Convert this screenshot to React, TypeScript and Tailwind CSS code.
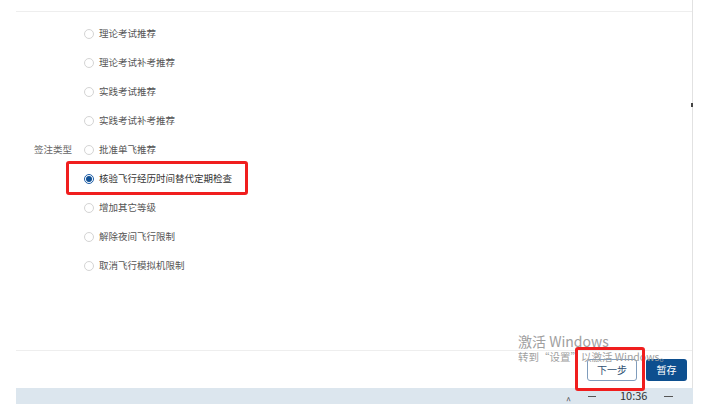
const options = [
  "理论考试推荐",
  "理论考试补考推荐",
  "实践考试推荐",
  "实践考试补考推荐",
  "批准单飞推荐",
  "核验飞行经历时间替代定期检查",
  "增加其它等级",
  "解除夜间飞行限制",
  "取消飞行模拟机限制",
];

const selected = 5;

function Radio({ checked }: { checked: boolean }) {
  return checked ? (
    <span className="flex h-[10px] w-[10px] items-center justify-center rounded-full border border-[#1d5ea8] bg-white">
      <span className="h-[6px] w-[6px] rounded-full bg-[#0f4f94]" />
    </span>
  ) : (
    <span className="h-[10px] w-[10px] rounded-full border border-[#d4d4d4] bg-white" />
  );
}

export default function App() {
  return (
    <div
      className="relative h-[404px] w-[711px] overflow-hidden bg-white"
      style={{ fontFamily: '"Noto Sans CJK SC", "Noto Sans", sans-serif' }}
    >
      <div className="ml-[16px] flex h-[388px] w-[677px] flex-col border-r border-[#e2e2e2]">
        <div className="h-[12px] shrink-0 border-b border-[#eeeeee]" />

        {/* Form */}
        <div className="relative flex flex-1 items-start border-b border-[#eeeeee]">
          <div className="flex items-center pt-[7px]">
            <div className="ml-[18px] w-[50px] text-[9.5px] leading-none text-[#666]">签注类型</div>
            <div className="flex flex-col">
              {options.map((o, i) => (
                <div key={o} className="flex h-[29px] items-center gap-[5px]">
                  <Radio checked={i === selected} />
                  <span
                    className={
                      i === selected
                        ? "text-[9.5px] leading-none text-[#333]"
                        : "text-[9.5px] leading-none text-[#555]"
                    }
                  >
                    {o}
                  </span>
                </div>
              ))}
            </div>
          </div>

          {/* annotation */}
          <div className="absolute left-[50px] top-[149px] h-[34px] w-[182px] rounded-[3px] border-[3px] border-[#f01e1e]" />
          <div className="absolute right-[-1px] top-[91px] h-[4px] w-[2px] bg-[#444]" />
        </div>

        {/* Footer */}
        <div className="flex h-[37px] shrink-0 items-center justify-end gap-[9px] pr-[5px]">
          <button className="h-[22px] w-[50px] rounded-[3px] border border-[#7f9cbc] bg-white text-[10px] text-[#2f4f72]">
            下一步
          </button>
          <button className="h-[22px] w-[41px] rounded-[3px] bg-[#0d4f8f] text-[10px] text-white">暂存</button>
        </div>
      </div>

      {/* Taskbar */}
      <div className="relative ml-[16px] h-[16px] w-[677px] bg-[#dce6ee]">
        <span className="absolute left-[550px] top-[8px] text-[9px] leading-none text-[#444]">^</span>
        <span className="absolute left-[572px] top-[8px] h-[6px] w-[8px] border-t border-[#555]" />
        <span className="absolute left-[604px] top-[2px] text-[11px] leading-none text-[#333]">10:36</span>
        <span className="absolute left-[648px] top-[8px] h-[6px] w-[9px] border-t border-[#555]" />
      </div>

      {/* Windows watermark */}
      <div className="pointer-events-none absolute left-[518px] top-[333px] leading-none text-[#a0a0a0]">
        <div className="text-[14px] leading-[17px]">激活 Windows</div>
        <div className="text-[10.5px] leading-[13px]">转到“设置”以激活 Windows。</div>
      </div>

      {/* annotation around next */}
      <div className="absolute left-[575px] top-[347px] h-[44px] w-[70px] rounded-[3px] border-[3px] border-[#f01e1e]" />
    </div>
  );
}
